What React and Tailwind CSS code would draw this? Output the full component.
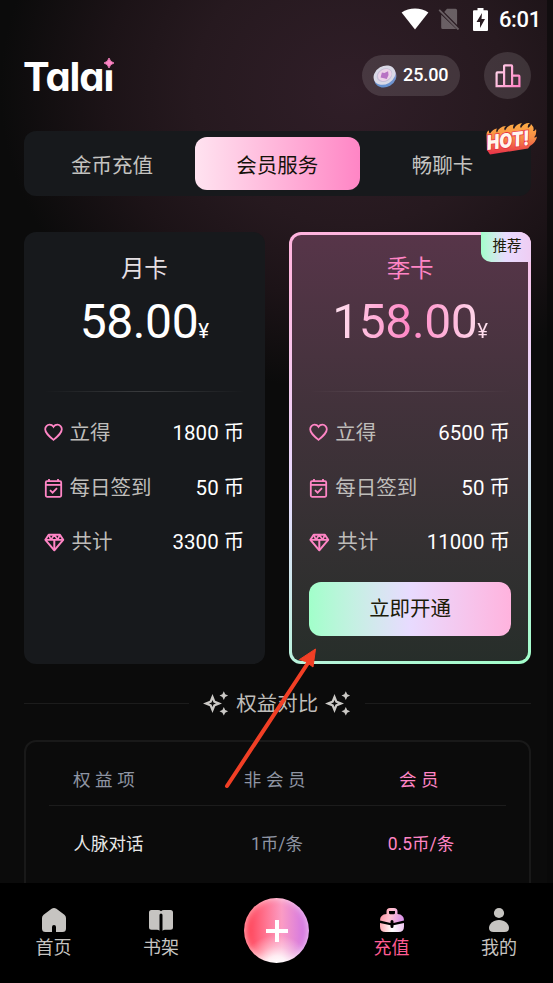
const plans = [
  {
    name: "月卡",
    price: "58.00",
    rows: [
      { icon: "heart", label: "立得", value: "1800 币" },
      { icon: "calendar", label: "每日签到", value: "50 币" },
      { icon: "diamond", label: "共计", value: "3300 币" },
    ],
  },
  {
    name: "季卡",
    price: "158.00",
    recommended: true,
    rows: [
      { icon: "heart", label: "立得", value: "6500 币" },
      { icon: "calendar", label: "每日签到", value: "50 币" },
      { icon: "diamond", label: "共计", value: "11000 币" },
    ],
  },
];

function StatusBar() {
  return (
    <div className="flex h-[38px] items-center justify-end pr-[6px] text-white">
      <svg className="mb-px" width="28" height="22" viewBox="0 0 28 22" fill="currentColor">
        <path d="M.6 4.600C8 -1 20 -1 27.400 4.600L14 21.500Z" />
      </svg>
      <svg className="ml-[9px] opacity-30" width="22" height="22" viewBox="0 0 22 22" fill="currentColor">
        <path d="M9 .8h8.500a1.600 1.600 0 0 1 1.600 1.600v14.600L6.200 4ZM3.200 6.800 18.300 21H4.800a1.600 1.600 0 0 1-1.600-1.600Z" />
        <path d="M1.200 1.800 20.500 21.500" stroke="currentColor" strokeWidth="1.800" />
      </svg>
      <svg className="ml-[13px]" width="15" height="23" viewBox="0 0 15 23">
        <path d="M4.500 0h6v2.300H14a1 1 0 0 1 1 1V22a1 1 0 0 1-1 1H1a1 1 0 0 1-1-1V3.300a1 1 0 0 1 1-1h3.500Z" fill="#fff" />
        <path d="M9 5 3.500 14H7v6l5-9H8.500Z" fill="#2a1c22" />
      </svg>
      <span className="ml-[11px] mt-[2px] text-[22px] font-medium leading-none tracking-[-0.3px]">6:01</span>
    </div>
  );
}

function Coin() {
  return (
    <svg width="24" height="24" viewBox="0 0 24 24">
      <defs>
        <linearGradient id="coinEdge" x1="0" y1="1" x2="1" y2="0">
          <stop offset="0" stopColor="#5c8fd0" />
          <stop offset=".55" stopColor="#7795cf" />
          <stop offset="1" stopColor="#f4a9b4" />
        </linearGradient>
      </defs>
      <g transform="rotate(-30 12 12)">
        <ellipse cx="11.500" cy="13.500" rx="11.500" ry="9.500" fill="url(#coinEdge)" />
        <ellipse cx="12" cy="11" rx="11.500" ry="9" fill="#d9d9e6" />
        <ellipse cx="12" cy="11" rx="8.200" ry="6.500" fill="#c6bed8" />
        <ellipse cx="12.300" cy="11" rx="7.200" ry="5.600" fill="#ecd3e8" />
        <path d="m7.500 11 3.500-3.500 2 1.500 4 .5-1.500 3.500-3.500 2.500-2-2Z" fill="#b873c4" />
      </g>
    </svg>
  );
}

function Header() {
  return (
    <header className="flex h-[93px] items-start justify-between pl-[23px] pr-[16px]">
      <div className="relative mt-[15px] font-['Inter'] text-[40px] font-bold leading-[48px] tracking-[-1.100px] text-white [font-feature-settings:'cv11']">
        Tala<span className="inline-block [clip-path:inset(36%_0_0_0)]">i</span>
        <svg className="absolute right-[-1px] top-[5px]" width="10" height="10" viewBox="0 0 10 10" fill="#ff85c5">
          <path d="M5 0Q6 4 10 5Q6 6 5 10Q4 6 0 5Q4 4 5 0Z" stroke="#ff85c5" strokeWidth=".8" />
        </svg>
      </div>
      <div className="flex items-center gap-6 pt-[14px]">
        <div className="flex h-[41px] w-[98px] items-center gap-[6px] rounded-full bg-white/12 pl-[11px]">
          <Coin />
          <span className="mt-[-2px] text-[18px] font-medium tracking-[-0.1px] text-white">25.00</span>
        </div>
        <div className="flex size-[47px] items-center justify-center rounded-full bg-white/12">
          <svg width="26" height="24" viewBox="0 0 26 24" fill="none" stroke="url(#rank)" strokeWidth="2.200">
            <defs>
              <linearGradient id="rank" gradientUnits="userSpaceOnUse" x1="0" y1="0" x2="26" y2="14">
                <stop offset="0" stopColor="#ffe0ef" />
                <stop offset="1" stopColor="#ff85c5" />
              </linearGradient>
            </defs>
            <path d="M9.100 22.200V2.200a.8.8 0 0 1 .8-.8h6.400a.8.8 0 0 1 .8.8v20M9.100 8.400H2.400a.8.8 0 0 0-.8.8v13h22.800V12.400a.8.8 0 0 0-.8-.8h-6.500" />
          </svg>
        </div>
      </div>
    </header>
  );
}

function HotBadge() {
  return (
    <svg className="absolute right-[-8px] top-[-10px] overflow-visible" width="56" height="37" viewBox="-2 -2 56 37">
      <defs>
        <linearGradient id="flame" x1="0" y1="0" x2="0" y2="1">
          <stop offset="0" stopColor="#ffae45" />
          <stop offset=".5" stopColor="#f58a45" />
          <stop offset="1" stopColor="#e82f49" />
        </linearGradient>
      </defs>
      <path
        d="M2 27 1.500 12Q1.500 8 4 7.500q-.2 2.500 1 3 3-4.500 7-5-1.500 2.500 0 4 2-6 9-6.500-3 2.500-1 4.500 3-6 9-6-2 3 0 4.500 2-5 8-6-3 3.500-1 5 3-5.500 9-5-3 1.500-2 5 3-1.500 3-4 4 4 2 7 2 .5 3-2 1 5.500-2 8.500 2 0 3-1-1 6-7 9.500l-2 2.500-38 6Z"
        fill="url(#flame)"
      />
      <text
        x="2.500"
        y="27"
        transform="rotate(-7 2.500 27)"
        textLength="43"
        lengthAdjust="spacingAndGlyphs"
        fill="#fff6ee"
        stroke="#e72f45"
        strokeWidth="1.600"
        paintOrder="stroke"
        className="font-['Inter'] text-[20px] font-black italic"
      >
        HOT!
      </text>
    </svg>
  );
}

function Tabs() {
  return (
    <div className="relative grid h-[65px] grid-cols-3 rounded-xl bg-[#17191c] p-[6px] text-[20.500px] text-[#c4c3c0]">
      <button className="pt-[5px]">金币充值</button>
      <button className="rounded-xl bg-linear-to-r from-[#ffe3f0] to-[#ff85c5] pt-[5px] text-[#15120a]">会员服务</button>
      <button className="pt-[5px]">畅聊卡</button>
      <HotBadge />
    </div>
  );
}

function RowIcon({ name }) {
  if (name === "heart") {
    return (
      <svg className="mr-[7px] mt-[-2px]" width="19" height="19" viewBox="0 0 19 19" fill="none" stroke="#ff85c5" strokeWidth="1.800">
        <path d="M9.500 16.800C4.500 12.500 1.200 9.800 1.200 6.200A4.400 4.400 0 0 1 5.600 1.700c1.600 0 3 .8 3.900 2.100.9-1.300 2.300-2.100 3.900-2.100a4.400 4.400 0 0 1 4.400 4.500c0 3.600-3.300 6.300-8.300 10.600Z" />
      </svg>
    );
  }
  if (name === "calendar") {
    return (
      <svg className="mr-[7px]" width="19" height="19" viewBox="0 0 19 19" fill="none" stroke="#ff85c5" strokeWidth="1.800">
        <path d="M5 0v3M14 0v3" />
        <rect x="1.800" y="2.200" width="15.400" height="15.600" rx="1.200" />
        <path d="M1.800 5.900h15.400" />
        <path d="m6 11.200 2.600 2.500 4.400-4.500" />
      </svg>
    );
  }
  return (
    <svg className="mr-[7px] mt-[-1px]" width="21" height="19" viewBox="0 0 21 19" fill="none" stroke="#ff85c5" strokeWidth="2" strokeLinejoin="round">
      <path d="M4.700 1.800h11.200L19.200 6.800 10.300 17.300 1.400 6.800Z" />
      <path d="M1.400 6.800h17.800M4.700 1.800 7 6.800l3.300-5 3.300 5 2.300-5" strokeWidth="1.700" />
      <path d="M10.300 7v10" strokeWidth="2" />
    </svg>
  );
}

function PlanBody({ plan }) {
  return (
    <>
      <h2
        className={
          plan.recommended
            ? "text-center text-[23.500px] leading-[34px] text-[#ff85c5]"
            : "text-center text-[23.500px] leading-[34px] text-[#e5dfe3]"
        }
      >
        {plan.name}
      </h2>
      <div className="mt-[8px] flex h-[56px] items-baseline justify-center leading-[56px]">
        <span
          className={
            plan.recommended
              ? "bg-linear-to-r from-[#ffe3f0] via-[#ff85c5] to-[#ffe3f0] bg-clip-text text-transparent"
              : "text-white"
          }
        >
          <span className="text-[48px] tracking-[-0.400px]">{plan.price}</span>
          <span className="text-[20.500px]">¥</span>
        </span>
      </div>
      <div className="mt-[41px] h-px bg-linear-to-r from-transparent via-white/15 to-transparent" />
      <div className="mt-[15px]">
        {plan.rows.map((row) => (
          <div key={row.label} className="flex h-[54.500px] items-center text-[20.500px]">
            <RowIcon name={row.icon} />
            <span className="text-[#bfbdba]">{row.label}</span>
            <span className="ml-auto mr-px text-white">{row.value}</span>
          </div>
        ))}
      </div>
    </>
  );
}

function PlanCard({ plan }) {
  if (!plan.recommended) {
    return (
      <div className="h-[432px] rounded-xl bg-[#17191c] px-5 pt-5">
        <PlanBody plan={plan} />
      </div>
    );
  }
  return (
    <div className="relative h-[432px] rounded-xl bg-[linear-gradient(160deg,#ffb3de_0%,#ffb8e0_10%,#e8dbff_50%,#a1ffca_100%)] p-[3px]">
      <div className="h-full rounded-[9px] bg-linear-to-b from-[#573549] via-[#42323b] via-40% to-[#272e2a] px-[17px] pt-[17px]">
        <PlanBody plan={plan} />
        <button className="mt-[12px] h-[54px] w-full rounded-xl bg-linear-to-r from-[#a1ffca] via-[#e8dbff] to-[#ffb3de] text-[20.500px] text-[#1c1b08]">
          立即开通
        </button>
      </div>
      <div className="absolute right-0 top-0 flex h-[30px] w-[50px] items-center justify-center rounded-bl-[10px] rounded-tr-xl bg-linear-to-r from-[#a1ffca] via-[#e8dbff] to-[#efcdf3] pl-[2px] pt-px text-[14.500px] text-[#1c1b08]">
        推荐
      </div>
    </div>
  );
}

function Sparkles() {
  return (
    <svg className="mt-[-1px]" width="26" height="25" viewBox="0 0 26 25" fill="#cbc9c6">
      <path
        d="M9.500 3 12.200 9.800 19 12.500 12.200 15.200 9.500 22 6.800 15.200 0 12.500 6.800 9.800ZM9.500 9 8.500 11.500 6 12.500 8.500 13.500 9.500 16 10.500 13.500 13 12.500 10.500 11.500Z"
        fillRule="evenodd"
      />
      <path d="M20.800.3l1.400 2.900 2.900 1.400-2.900 1.400-1.400 2.900-1.400-2.900-2.900-1.400 2.900-1.400ZM20.800 16l1.400 2.900 2.900 1.400-2.900 1.400-1.400 2.900-1.400-2.900-2.900-1.400 2.900-1.400Z" />
    </svg>
  );
}

function Benefits() {
  return (
    <section>
      <div className="mt-[20px] flex h-[40px] items-center">
        <div className="mt-[-1px] h-px flex-1 bg-[#1c1c1c]" />
        <div className="ml-[14px] mr-[14px] flex items-center gap-[7px] text-[20.500px] text-[#bfbdba]">
          <Sparkles />
          <span className="mt-[2px]">权益对比</span>
          <Sparkles />
        </div>
        <div className="mt-[-1px] h-px flex-1 bg-[#1c1c1c]" />
      </div>
      <div className="mt-[16px] h-[160px] rounded-xl border-2 border-[#191919] px-[23px] text-[17.500px] text-[#8f95a3]">
        <div className="grid h-[64px] grid-cols-[156px_145px_143px] items-center border-b border-[#1c1c1c] pt-[14px] tracking-[4.600px]">
          <span className="pl-[24.500px]">权益项</span>
          <span className="text-center">非会员</span>
          <span className="text-center text-[#ff85c5]">会员</span>
        </div>
        <div className="grid h-[78px] grid-cols-[156px_145px_143px] items-center">
          <span className="pl-[25px] text-[#e8e8e8]">人脉对话</span>
          <span className="text-center">1币/条</span>
          <span className="text-center text-[#ff85c5]">0.5币/条</span>
        </div>
      </div>
    </section>
  );
}

function NavItem({ label, active, children }) {
  return (
    <div
      className={
        active
          ? "flex w-[60px] flex-col items-center text-[18px] leading-[26px] text-[#ff5c93]"
          : "flex w-[60px] flex-col items-center text-[18px] leading-[26px] text-[#c6c4c1]"
      }
    >
      <svg width="26" height="26" viewBox="0 0 26 26" fill="#c6c4c1">
        {children}
      </svg>
      <span className="mt-[2px]">{label}</span>
    </div>
  );
}

function BottomNav() {
  return (
    <nav className="relative flex h-[100px] items-start bg-black pl-[23.500px] pt-[24px]">
      <NavItem label="首页">
        <path d="M10.600 1.800a4 4 0 0 1 4.800 0l8 6q1.600 1.200 1.600 3.200v10.500a3.500 3.500 0 0 1-3.500 3.500H15v-5a2 2 0 0 0-4 0v5H4.500A3.500 3.500 0 0 1 1 21.500V11q0-2 1.600-3.200Z" />
      </NavItem>
      <div className="ml-[47.500px]">
        <NavItem label="书架">
          <path d="M3.500 3H10q2 0 3 1.200Q14 3 16 3h6.500A2.500 2.500 0 0 1 25 5.500v14.700a2.500 2.500 0 0 1-2.500 2.500H17q-1.500 0-2.500 1V8a1.500 1.500 0 0 0-3 0v15.700Q10.500 22.700 9 22.700H3.500A2.500 2.500 0 0 1 1 20.200V5.500A2.500 2.500 0 0 1 3.500 3Z" />
        </NavItem>
      </div>
      <div className="ml-[53px] mt-[-9px] flex size-[65px] items-center justify-center rounded-full bg-[radial-gradient(ellipse_34px_30px_at_50%_103%,#ffffff_0%,#ffffffd8_30%,#ffffff60_62%,#ffffff00_100%),linear-gradient(90deg,#ff4b60_10%,#ff7592_34%,#fb9cc4_58%,#d77be0_90%)] shadow-[inset_0_0_7px_#ffffffb3]">
        <svg width="22" height="22" viewBox="0 0 22 22" stroke="#fff" strokeWidth="4">
          <path d="M11 0v22M0 11h22" />
        </svg>
      </div>
      <div className="ml-[52.500px]">
        <NavItem label="充值" active>
          <defs>
            <linearGradient id="bag" x1="0" y1="0" x2="1" y2=".2">
              <stop offset="0" stopColor="#ff8a96" />
              <stop offset=".5" stopColor="#ffc0d0" />
              <stop offset="1" stopColor="#dd96e8" />
            </linearGradient>
            <linearGradient id="bagLow">
              <stop offset="0" stopColor="#ffabb4" />
              <stop offset=".5" stopColor="#fff" />
              <stop offset="1" stopColor="#f0c8f2" />
            </linearGradient>
          </defs>
          <path d="M7.500 7V4.500Q7.500 1 11 1h4q3.500 0 3.500 3.500V7q6.500.5 6.500 6.500l-10.500 2.500v-1.500a1.500 1.500 0 0 0-3 0V16L1 13.500Q1 7.500 7.500 7ZM10 4v2q0 1.300 1.300 1.300h3.400Q16 7.300 16 6V4Z" fill="url(#bag)" fillRule="evenodd" />
          <path d="m1 16 10.500 2.300v1.200a1.500 1.500 0 0 0 3 0v-1.200L25 16v3.500Q25 25 19.500 25h-13Q1 25 1 19.500Z" fill="url(#bagLow)" />
        </NavItem>
      </div>
      <div className="ml-[47.500px]">
        <NavItem label="我的">
          <circle cx="13" cy="6" r="5.100" />
          <path d="M13 13c6 0 10 4 10 8q0 4-4.500 4h-11Q3 25 3 21c0-4 4-8 10-8Z" />
        </NavItem>
      </div>
    </nav>
  );
}

export default function App() {
  return (
    <div className="relative flex h-[983px] w-[553px] flex-col overflow-hidden bg-[#0b0b0b] font-['Roboto','Noto_Sans_CJK_SC',sans-serif]">
      <div className="h-[883px] overflow-hidden border-r-[6px] border-[#09080999] bg-[radial-gradient(350px_300px_at_350px_90px,#301e28_0%,#26191f_45%,#1c1317_70%,#0b0b0b_100%)] bg-origin-border">
        <StatusBar />
        <Header />
        <main className="w-[531px] pl-[23.500px]">
          <Tabs />
          <div className="mt-[35.500px] grid grid-cols-2 gap-[24px]">
            {plans.map((plan) => (
              <PlanCard key={plan.name} plan={plan} />
            ))}
          </div>
          <Benefits />
        </main>
      </div>
      <BottomNav />
      {/* pointer to the subscribe button */}
      <svg className="absolute left-[220px] top-[640px]" width="104" height="152" viewBox="0 0 104 152">
        <path d="M7 146 88 23" stroke="#f13f25" strokeWidth="4" strokeLinecap="round" />
        <path d="M95.500 9 79.500 19.500l6 2 7.500 5.500Z" fill="#f13f25" stroke="#f13f25" />
      </svg>
    </div>
  );
}
